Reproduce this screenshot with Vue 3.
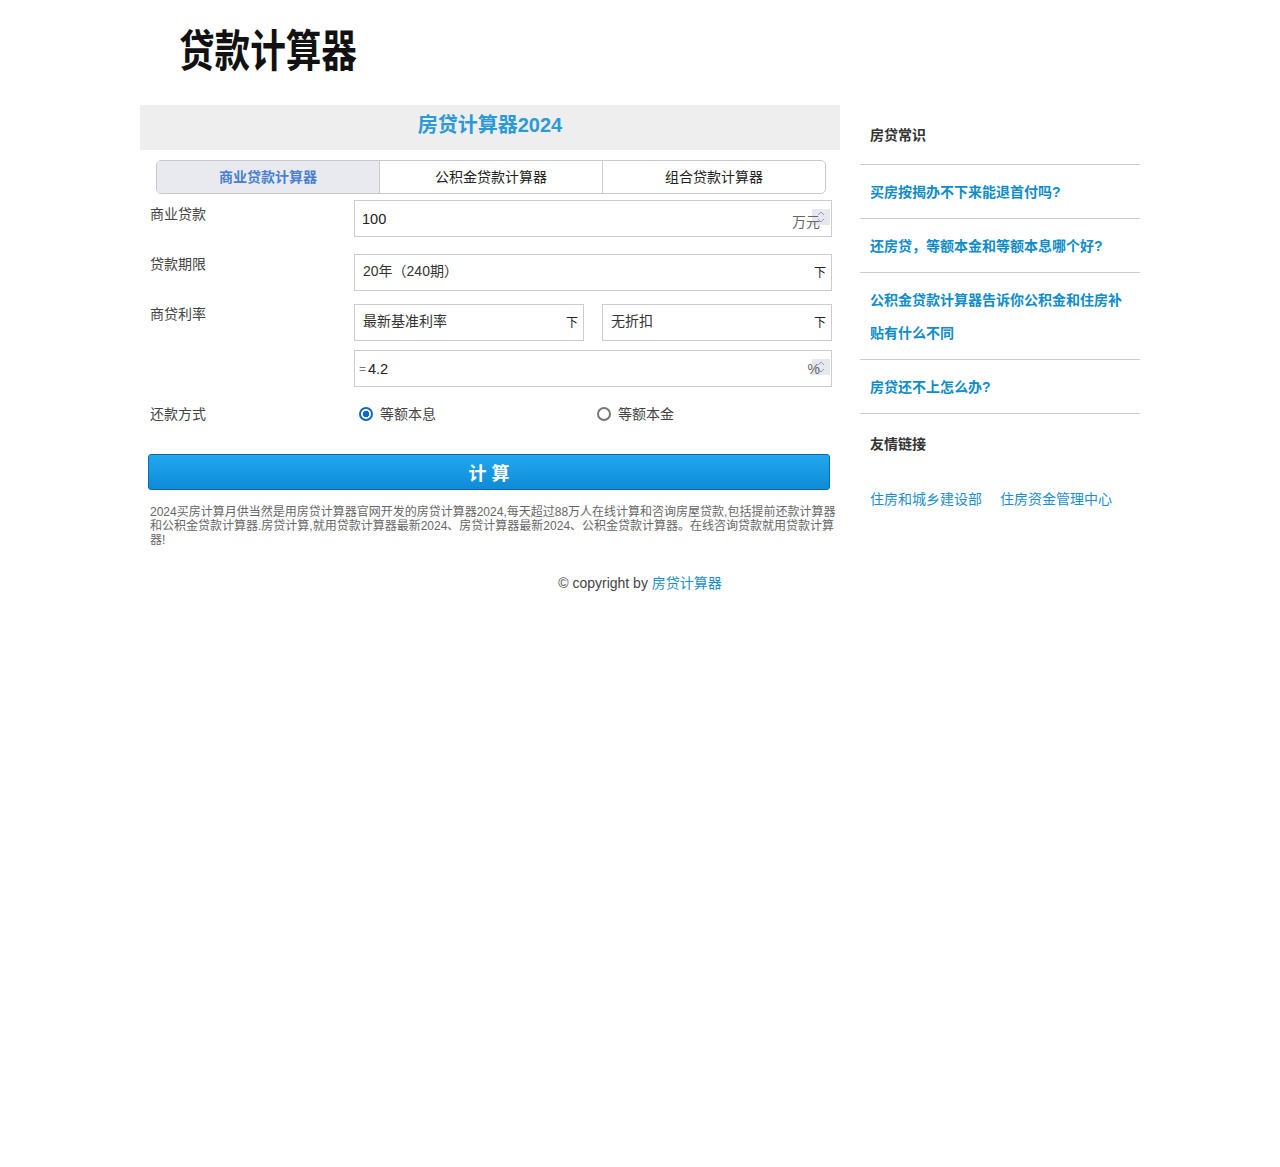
<script setup>
const tabs = ['商业贷款计算器', '公积金贷款计算器', '组合贷款计算器']
const articles = ['买房按揭办不下来能退首付吗?', '还房贷，等额本金和等额本息哪个好?', '公积金贷款计算器告诉你公积金和住房补贴有什么不同', '房贷还不上怎么办?']
const links = ['住房和城乡建设部', '住房资金管理中心']
</script>

<template>
  <div class="page">
    <header class="header"><div class="logo">贷款计算器</div></header>
    <div class="columns">
      <main class="main">
        <h1 class="title">房贷计算器2024</h1>
        <div class="tabs">
          <div v-for="(t, i) in tabs" :key="t" class="tab" :class="{ active: i === 0 }">{{ t }}</div>
        </div>
        <div class="form">
          <div class="row first">
            <label class="lbl">商业贷款</label>
            <div class="box num">
              <span class="val">100</span>
              <span class="spin"><svg width="10" height="14" viewBox="0 0 10 14"><path d="M2 5l3-3 3 3M2 9l3 3 3-3" fill="none" stroke="#9a9aa4" stroke-width="1"/></svg></span>
              <span class="unit">万元</span>
            </div>
          </div>
          <div class="row term">
            <label class="lbl">贷款期限</label>
            <div class="box sel"><span>20年（240期）</span><span class="arrow">下</span></div>
          </div>
          <div class="row rate">
            <label class="lbl">商贷利率</label>
            <div class="rate-ctl">
              <div class="pair">
                <div class="box sel short"><span>最新基准利率</span><span class="arrow">下</span></div>
                <div class="box sel short wide"><span>无折扣</span><span class="arrow">下</span></div>
              </div>
              <div class="box num pct">
                <span class="eq">=</span><span class="val">4.2</span>
                <span class="spin"><svg width="10" height="14" viewBox="0 0 10 14"><path d="M2 5l3-3 3 3M2 9l3 3 3-3" fill="none" stroke="#9a9aa4" stroke-width="1"/></svg></span>
                <span class="unit">%</span>
              </div>
            </div>
          </div>
          <div class="row pay">
            <label class="lbl">还款方式</label>
            <div class="radios">
              <span class="radio-item on"><i class="dot"></i>等额本息</span>
              <span class="radio-item"><i class="dot"></i>等额本金</span>
            </div>
          </div>
        </div>
        <button class="calc">计 算</button>
        <p class="desc">2024买房计算月供当然是用房贷计算器官网开发的房贷计算器2024,每天超过88万人在线计算和咨询房屋贷款,包括提前还款计算器和公积金贷款计算器.房贷计算,就用贷款计算器最新2024、房贷计算器最新2024、公积金贷款计算器。在线咨询贷款就用贷款计算器!</p>
      </main>
      <aside class="side">
        <h3 class="side-title">房贷常识</h3>
        <a v-for="a in articles" :key="a" class="art">{{ a }}</a>
        <h3 class="side-title friend">友情链接</h3>
        <div class="links"><a v-for="l in links" :key="l">{{ l }}</a></div>
      </aside>
    </div>
    <footer class="foot">© copyright by <a>房贷计算器</a></footer>
  </div>
</template>

<style>
html, body { margin: 0; background: #fff; }
</style>

<style scoped>
.page {
  width: 1000px;
  min-height: 1167px;
  margin: 0 auto;
  font-family: "Liberation Sans", "Noto Sans CJK SC", sans-serif;
  font-size: 14px;
  color: #333;
}
.header { height: 105px; }
.logo {
  padding: 19px 0 0 39px;
  font-family: "Noto Sans CJK SC", sans-serif;
  font-size: 35.6px;
  line-height: 52px;
  font-weight: 700;
  color: #111;
  transform: scaleY(1.24);
  transform-origin: 0 30px;
}
.columns { display: flex; justify-content: space-between; }
.main { width: 700px; }
.title {
  margin: 0;
  height: 45px;
  background: #eeeeef;
  color: #2a9ad8;
  font-size: 20px;
  line-height: 41px;
  font-weight: 700;
  text-align: center;
}
.tabs {
  display: flex;
  width: 670px;
  height: 34px;
  margin: 10px 0 0 16px;
  box-sizing: border-box;
  border: 1px solid #c8c8c8;
  border-radius: 5px;
  overflow: hidden;
}
.tab {
  flex: 1;
  text-align: center;
  line-height: 32px;
  font-size: 14px;
  color: #222;
  border-left: 1px solid #ccc;
}
.tab:first-child { border-left: 0; }
.tab.active { background: #e8eaef; color: #4a7fd0; font-weight: 700; }
.form { padding-top: 6px; }
.row { display: flex; }
.lbl {
  width: 214px;
  padding: 6px 0 0 10px;
  box-sizing: border-box;
  font-size: 14px;
  line-height: 16px;
  color: #444;
}
.row.term .lbl, .row.rate .lbl { padding-top: 2px; }
.row.term { margin-top: 17px; }
.row.rate { margin-top: 13px; }
.row.pay { margin-top: 17px; height: 20px; }
.row.pay .lbl { padding-top: 2px; }
.rate-ctl { display: flex; flex-direction: column; gap: 9px; }
.pair { display: flex; gap: 18px; }
.box {
  position: relative;
  box-sizing: border-box;
  width: 478px;
  height: 37px;
  border: 1px solid #ccc;
  display: flex;
  align-items: center;
  font-size: 14px;
  color: #333;
}
.box.short { width: 230px; }
.box.short.wide { width: 230px; }
.val { padding-left: 7px; font-size: 14.5px; color: #222; }
.eq { padding-left: 4px; font-size: 12px; color: #777; }
.pct .val { padding-left: 2px; }
.sel { justify-content: space-between; padding: 0 5px 5px 8px; }
.arrow { margin-top: 2px; font-size: 12px; color: #222; }
.unit { position: absolute; right: 11px; top: 12px; font-size: 14px; line-height: 18px; color: #666; }
.pct .unit { top: 9px; }
.spin {
  position: absolute;
  right: 1px;
  top: 8px;
  width: 18px;
  height: 16px;
  background: #e6e7ef;
  display: flex;
  align-items: center;
  justify-content: center;
}
.radios { display: flex; }
.radio-item {
  width: 238px;
  display: flex;
  align-items: center;
  gap: 7px;
  padding-left: 5px;
  box-sizing: border-box;
  font-size: 14px;
  line-height: 18px;
  color: #444;
}
.dot {
  box-sizing: border-box;
  width: 14px;
  height: 14px;
  border: 2px solid #777;
  border-radius: 50%;
  background: #fff;
}
.on .dot {
  border-color: #1268c8;
  background: radial-gradient(circle, #1268c8 0 3px, #fff 3.6px);
}
.calc {
  display: block;
  width: 682px;
  height: 36px;
  margin: 30px 0 0 8px;
  padding: 0;
  border: 1px solid #0a6cab;
  border-radius: 3px;
  background: linear-gradient(#22a8ee, #0f8ad8);
  color: #fff;
  font-family: inherit;
  font-size: 18px;
  font-weight: 700;
}
.desc {
  margin: 15px 0 0 10px;
  width: 686px;
  font-size: 12px;
  line-height: 14px;
  color: #666;
}
.side { width: 280px; }
.side-title {
  margin: 0;
  padding-left: 10px;
  font-size: 14px;
  color: #333;
  font-weight: 700;
}
.side > .side-title:first-child { height: 59px; line-height: 60px; border-bottom: 1px solid #ccc; }
.art {
  display: block;
  padding: 11px 10px 9px;
  font-size: 14px;
  line-height: 33px;
  font-weight: 700;
  color: #0e8ccb;
  border-bottom: 1px solid #ccc;
}
.friend { height: 60px; line-height: 60px; }
.links { display: flex; gap: 18px; padding: 15px 0 0 10px; font-size: 14px; line-height: 20px; color: #1a8fd0; }
.foot {
  padding-top: 26px;
  text-align: center;
  font-size: 14px;
  line-height: 20px;
  color: #444;
}
.foot a { color: #1a8fd0; }
</style>
